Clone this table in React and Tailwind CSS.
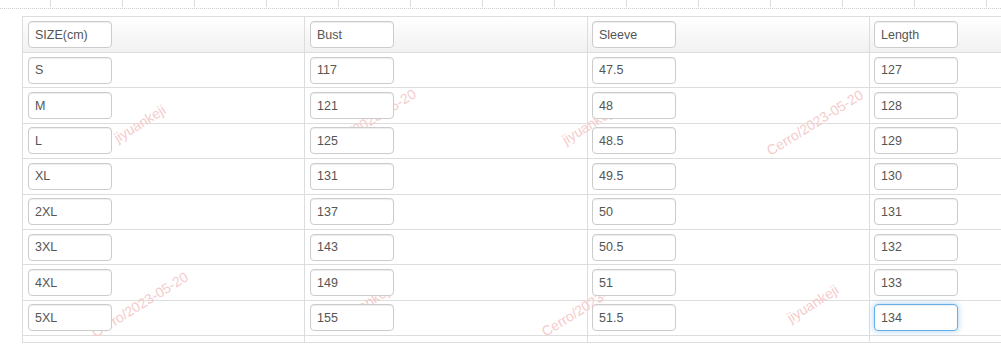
const columns = [
  { label: "SIZE(cm)", w: "w-[282px]", pad: "pl-[5px]" },
  { label: "Bust", w: "w-[283px]", pad: "pl-[5px]" },
  { label: "Sleeve", w: "w-[282px]", pad: "pl-[4px]" },
  { label: "Length", w: "w-[283px]", pad: "pl-[4px]" },
];

const rows = [
  ["S", "117", "47.5", "127"],
  ["M", "121", "48", "128"],
  ["L", "125", "48.5", "129"],
  ["XL", "131", "49.5", "130"],
  ["2XL", "137", "50", "131"],
  ["3XL", "143", "50.5", "132"],
  ["4XL", "149", "51", "133"],
  ["5XL", "155", "51.5", "134"],
];

// faint watermark stamps over the grid
const stamps = [
  { text: "jiyuankeji", pos: "left-[140px] top-[124px]" },
  { text: "Cerro/2023-05-20", pos: "left-[368px] top-[122px]" },
  { text: "jiyuankeji", pos: "left-[588px] top-[126px]" },
  { text: "Cerro/2023-05-20", pos: "left-[815px] top-[123px]" },
  { text: "Cerro/2023-05-20", pos: "left-[140px] top-[305px]" },
  { text: "jiyuankeji", pos: "left-[366px] top-[304px]" },
  { text: "Cerro/2023-05-20", pos: "left-[590px] top-[304px]" },
  { text: "jiyuankeji", pos: "left-[813px] top-[304px]" },
];

function Cell({ col, value, focused }) {
  return (
    <div className={`${col.w} ${col.pad} shrink-0 border-r border-[#dddddd] flex items-center`}>
      <input
        readOnly
        value={value}
        className={`relative z-10 w-[84px] h-[27px] rounded-[4px] bg-white px-[6px] text-[12.5px] text-[#555555] outline-none border ${
          focused
            ? "border-[#66afe9] shadow-[inset_0_1px_1px_rgba(0,0,0,0.075),0_0_6px_rgba(102,175,233,0.6)]"
            : "border-[#cccccc] shadow-[inset_0_1px_1px_rgba(0,0,0,0.075)]"
        }`}
        style={{ fontFamily: '"Liberation Sans", Arial, sans-serif' }}
      />
    </div>
  );
}

export default function App() {
  return (
    <div
      className="relative w-full h-[348px] overflow-hidden bg-white"
      style={{ fontFamily: '"Liberation Sans", Arial, sans-serif' }}
    >
      {/* tail of the previous grid */}
      <div className="flex h-[7px]">
        <div className="w-[50px] shrink-0" />
        {Array.from({ length: 14 }).map((_, i) => (
          <div key={i} className="w-[72px] shrink-0 border-l border-[#dddddd]" />
        ))}
      </div>
      <div className="mt-[1px] border-t border-dotted border-[#cfcfcf]" />

      {/* size table */}
      <div className="mt-[7px] ml-[22px] w-max border-l border-t border-[#dddddd]">
        <div className="flex h-[36px] border-b border-[#dddddd] bg-linear-to-b from-white to-[#f1f1f1]">
          {columns.map((c) => (
            <Cell key={c.label} col={c} value={c.label} />
          ))}
        </div>
        {rows.map((r, ri) => (
          <div key={r[0]} className="flex h-[35.4px] border-b border-[#dddddd]">
            {r.map((v, ci) => (
              <Cell
                key={ci}
                col={columns[ci]}
                value={v}
                focused={ri === rows.length - 1 && ci === 3}
              />
            ))}
          </div>
        ))}
        <div className="flex h-[7px] border-b border-[#dddddd]">
          {columns.map((c) => (
            <div key={c.label} className={`${c.w} shrink-0 border-r border-[#dddddd]`} />
          ))}
        </div>
      </div>

      {/* watermark layer */}
      <div className="pointer-events-none absolute inset-0">
        {stamps.map((s, i) => (
          <span
            key={i}
            className={`absolute ${s.pos} -translate-x-1/2 -translate-y-1/2 -rotate-[32deg] whitespace-nowrap text-[14px] text-[#f5cccc]`}
          >
            {s.text}
          </span>
        ))}
      </div>
    </div>
  );
}
